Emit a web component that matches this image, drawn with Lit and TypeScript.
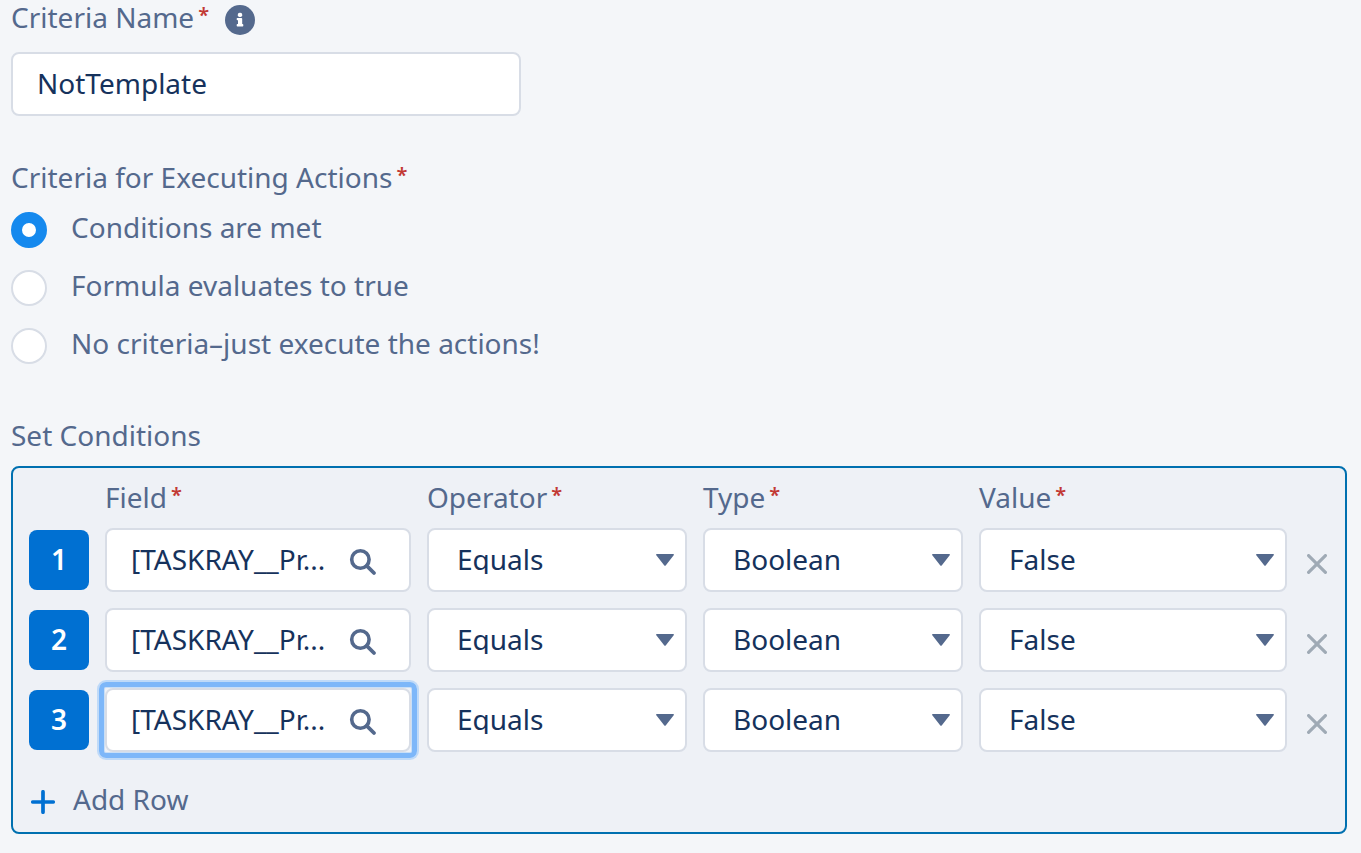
import { LitElement, html, css, svg } from "lit";
import { customElement, property, state } from "lit/decorators.js";

const TEXT_FONT = css`"Noto Sans", "Open Sans", sans-serif`;

interface Condition {
  field: string;
  operator: string;
  type: string;
  value: string;
}

const OPERATORS = ["Equals", "Does not equal", "Is null"];
const TYPES = ["Boolean", "Formula", "Global Constant"];
const VALUES = ["False", "True"];

const infoIcon = svg`
  <svg width="30" height="30" viewBox="0 0 30 30" aria-hidden="true">
    <circle cx="15" cy="15" r="15" fill="#54698d" />
    <rect x="12.800" y="7.800" width="4.400" height="4.200" rx="1.800" fill="#fff" />
    <path d="M12.200 13h4.200c.5 0 .8.3.8.8v5.200h.4c.4 0 .7.3.7.700v1c0 .4-.3.700-.7.700h-5.200c-.4 0-.7-.3-.7-.7v-1c0-.4.3-.7.700-.700h.600v-3.700h-.600c-.4 0-.7-.3-.7-.7v-.9c0-.4.2-.7.500-.700z" fill="#fff" />
  </svg>`;

const searchIcon = svg`
  <svg width="28" height="28" viewBox="0 0 28 28" aria-hidden="true" fill="none" stroke="#54698d">
    <circle cx="11.4" cy="11.5" r="8.7" stroke-width="3.6" />
    <path d="M17.8 17.8L25 25" stroke-width="3.8" stroke-linecap="round" />
  </svg>`;

const closeIcon = svg`
  <svg width="20" height="20" viewBox="0 0 20 20" aria-hidden="true" fill="none" stroke="#9faab5">
    <path d="M1.6 1.6L18.4 18.4M18.4 1.6L1.6 18.4" stroke-width="3.200" stroke-linecap="round" />
  </svg>`;

const plusIcon = svg`
  <svg width="24" height="24" viewBox="0 0 24 24" aria-hidden="true" fill="none" stroke="#0070d2">
    <path d="M12 1.8V22.2M1.8 12H22.2" stroke-width="3.700" stroke-linecap="round" />
  </svg>`;

const arrowIcon = svg`
  <svg class="arrow" width="18" height="12" viewBox="0 0 18 12" aria-hidden="true">
    <path d="M.8 0H17.2c.7 0 1 .7.5 1.200L9.700 11.400c-.4.500-1 .5-1.400 0L.3 1.200C-.2.700.1 0 .8 0z" fill="#54698d" />
  </svg>`;

@customElement("condition-row")
export class ConditionRow extends LitElement {
  @property({ type: Number }) number = 1;
  @property({ attribute: false }) condition!: Condition;
  @property({ type: Boolean }) active = false;

  static styles = css`
    :host {
      display: grid;
      grid-template-columns: subgrid;
      grid-column: 1 / -1;
      align-items: center;
      color: #16325c;
    }
    .number {
      box-sizing: border-box;
      display: grid;
      place-items: center;
      height: 60px;
      padding-bottom: 2px;
      border-radius: 8px;
      background: #0070d2;
      color: #fff;
      font-weight: 600;
    }
    .box {
      box-sizing: border-box;
      display: grid;
      min-width: 0;
      height: 64px;
      border: 2px solid #d8dde6;
      border-radius: 8px;
      background: #fff;
    }
    .lookup {
      grid-template-columns: minmax(0, 1fr) 28px;
      align-items: center;
      gap: 8px;
      padding: 0 32px 0 24px;
    }
    .lookup.active {
      position: relative;
    }
    .lookup.active::after {
      content: "";
      position: absolute;
      inset: -8px;
      border: 5px solid #7db7f9;
      border-radius: 7px;
      box-shadow: 0 0 0 2px #bfdaf8, inset 0 0 0 1px #c9dff7;
      pointer-events: none;
    }
    input,
    select {
      box-sizing: border-box;
      width: 100%;
      min-width: 0;
      margin: 0;
      border: 0;
      outline: 0;
      background: transparent;
      color: inherit;
      font: inherit;
    }
    input {
      height: 60px;
      padding: 0 0 2px;
    }
    button {
      display: grid;
      place-items: center;
      padding: 0;
      border: 0;
      background: transparent;
      cursor: pointer;
    }
    .find {
      padding-top: 4px;
    }
    .choice {
      grid-template-columns: minmax(0, 1fr);
      align-items: center;
    }
    .choice > * {
      grid-area: 1 / 1;
    }
    select {
      appearance: none;
      height: 60px;
      padding: 0 40px 2px 28px;
    }
    .arrow {
      justify-self: end;
      margin-right: 11px;
      pointer-events: none;
    }
    .remove {
      padding-top: 8px;
    }
  `;

  private choice(label: string, options: string[], value: string) {
    return html`
      <div class="box choice">
        <select aria-label="${label} ${this.number}">
          ${options.map((o) => html`<option ?selected=${o === value}>${o}</option>`)}
        </select>
        ${arrowIcon}
      </div>
    `;
  }

  private remove() {
    this.dispatchEvent(new CustomEvent("remove-row"));
  }

  render() {
    const c = this.condition;
    return html`
      <div class="number">${this.number}</div>
      <div class="box lookup ${this.active ? "active" : ""}">
        <input type="text" readonly aria-label="Field ${this.number}" .value=${c.field} />
        <button class="find" type="button" aria-label="Find a field">${searchIcon}</button>
      </div>
      ${this.choice("Operator", OPERATORS, c.operator)}
      ${this.choice("Type", TYPES, c.type)}
      ${this.choice("Value", VALUES, c.value)}
      <button class="remove" type="button" aria-label="Remove row ${this.number}" @click=${this.remove}>
        ${closeIcon}
      </button>
    `;
  }
}

@customElement("app-root")
export class AppRoot extends LitElement {
  @state() private rows: Condition[] = [1, 2, 3].map(() => ({
    field: "[TASKRAY__Pr...",
    operator: "Equals",
    type: "Boolean",
    value: "False",
  }));

  static styles = css`
    :host {
      display: block;
      box-sizing: border-box;
      min-height: 100vh;
      padding: 2px 14px 19px 11px;
      background: #f4f6f9;
      color: #54698d;
      font: 28px/30px ${TEXT_FONT};
    }
    .heading {
      display: flex;
      align-items: center;
      height: 30px;
    }
    .required {
      align-self: start;
      margin-left: 4px;
      color: #c23934;
      font-size: 20px;
      font-weight: 600;
      line-height: 26px;
    }
    .info {
      display: grid;
      margin-left: 16px;
      padding: 6px 0 0;
      border: 0;
      background: transparent;
    }
    .name {
      display: block;
      box-sizing: border-box;
      width: 510px;
      max-width: 100%;
      height: 64px;
      margin: 20px 0 46px;
      padding: 0 24px 2px;
      border: 2px solid #d8dde6;
      border-radius: 8px;
      outline: 0;
      background: #fff;
      color: #16325c;
      font: inherit;
    }
    fieldset {
      min-width: 0;
      margin: 0 0 56px;
      padding: 0;
      border: 0;
    }
    legend {
      padding: 0;
    }
    .options {
      display: grid;
      justify-items: start;
      gap: 22px;
      margin-top: 20px;
    }
    .option {
      display: flex;
      gap: 24px;
      height: 36px;
    }
    .option input {
      appearance: none;
      box-sizing: border-box;
      flex: none;
      width: 36px;
      height: 36px;
      margin: 0;
      border: 2px solid #d8dde6;
      border-radius: 50%;
      background: #fff;
    }
    .option input:checked {
      border: 11px solid #1589ee;
    }
    .conditions {
      display: grid;
      grid-template-columns: 60px 306fr 260fr 260fr 308fr 28px;
      gap: 16px;
      margin-top: 16px;
      padding: 14px 14px 18px 16px;
      border: 2px solid #0070b0;
      border-radius: 8px;
      background: #eef1f6;
    }
    .conditions .heading:first-child {
      grid-column: 2;
    }
    .value-heading {
      grid-column: 5 / -1;
    }
    .add {
      grid-column: 1 / -1;
      justify-self: start;
      display: flex;
      align-items: center;
      gap: 18px;
      height: 30px;
      margin-top: 16px;
      padding: 0 0 0 2px;
      border: 0;
      background: transparent;
      color: inherit;
      font: inherit;
      cursor: pointer;
    }
    .add svg {
      margin-top: 6px;
    }
  `;

  private addRow() {
    this.rows = [...this.rows, { field: "", operator: "Equals", type: "Boolean", value: "False" }];
  }

  private removeRow(index: number) {
    this.rows = this.rows.filter((_, i) => i !== index);
  }

  private option(label: string, checked = false) {
    return html`
      <label class="option">
        <input type="radio" name="criteria" .checked=${checked} />
        <span>${label}</span>
      </label>
    `;
  }

  render() {
    const star = html`<span class="required">*</span>`;
    return html`
      <div class="heading">
        <label for="name">Criteria Name</label>${star}
        <button class="info" type="button" aria-label="Help">${infoIcon}</button>
      </div>
      <input id="name" class="name" type="text" required value="NotTemplate" />

      <fieldset>
        <legend><span class="heading">Criteria for Executing Actions${star}</span></legend>
        <div class="options">
          ${this.option("Conditions are met", true)}
          ${this.option("Formula evaluates to true")}
          ${this.option("No criteria–just execute the actions!")}
        </div>
      </fieldset>

      <div class="heading">Set Conditions</div>
      <section class="conditions">
        <div class="heading">Field${star}</div>
        <div class="heading">Operator${star}</div>
        <div class="heading">Type${star}</div>
        <div class="heading value-heading">Value${star}</div>
        ${this.rows.map(
          (row, i) => html`
            <condition-row
              .number=${i + 1}
              .condition=${row}
              .active=${i === 2}
              @remove-row=${() => this.removeRow(i)}
            ></condition-row>
          `
        )}
        <button class="add" type="button" @click=${this.addRow}>${plusIcon}<span>Add Row</span></button>
      </section>
    `;
  }
}
